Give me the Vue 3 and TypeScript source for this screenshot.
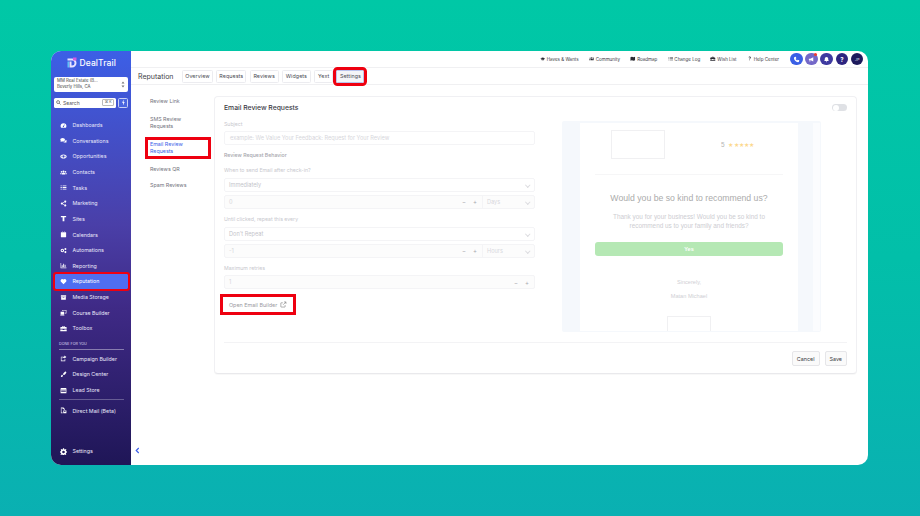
<script setup lang="ts">
interface NavItem {
  label: string
  icon: string
  active?: boolean
}

const icons: Record<string, string> = {
  dash: 'M12 4a10 10 0 0 0-10 10c0 2.2.7 4.2 1.9 5.8h16.2A10 10 0 0 0 22 14 10 10 0 0 0 12 4zm1.6 11.2a2 2 0 1 1-2.4-1.6L15 8l1 .6-2.4 6.6z',
  chat: 'M9 3C4.6 3 1 5.8 1 9.2c0 1.5.7 2.9 1.8 3.9L2 17l4.2-1.8c.9.3 1.8.4 2.8.4 4.4 0 8-2.8 8-6.4S13.4 3 9 3zm10.5 6.4c0 4-3.5 7.2-8 7.7 1.200 1.200 3 1.900 5 1.900.7 0 1.300-.1 2-.3L22 20l-.6-3.300c1-.9 1.600-2.100 1.600-3.400 0-1.600-1.300-3-3.500-3.900z',
  opp: 'M12 5C6 5 1 8 1 12s5 7 11 7 11-3 11-7-5-7-11-7zm0 11a4 4 0 1 1 0-8 4 4 0 0 1 0 8zm-9-4c0-1.500 1.200-2.800 3-3.800a6 6 0 0 0 0 7.600C4.200 14.800 3 13.500 3 12zm15 3.800a6 6 0 0 0 0-7.600c1.800 1 3 2.300 3 3.800s-1.200 2.800-3 3.800z',
  users: 'M12 5a3.500 3.500 0 1 0 0 7 3.500 3.500 0 0 0 0-7zM5 7a2.500 2.500 0 1 0 0 5 2.500 2.500 0 0 0 0-5zm14 0a2.500 2.500 0 1 0 0 5 2.500 2.500 0 0 0 0-5zM12 13c-3.500 0-6 1.800-6 4v2h12v-2c0-2.200-2.500-4-6-4zM5 13c-2.500 0-4 1.300-4 3v2h3.500v-1c0-1.500.6-2.900 1.700-4H5zm14 0h-1.200c1.100 1.100 1.700 2.500 1.700 4v1H23v-2c0-1.700-1.500-3-4-3z',
  tasks: 'M2 5h4v3H2zM9 5h13v3H9zM2 10.500h4v3H2zM9 10.500h13v3H9zM2 16h4v3H2zM9 16h13v3H9z',
  share: 'M18 2a3.500 3.500 0 0 0-3.400 4.300L8.700 9.500a3.500 3.500 0 1 0 0 5l5.900 3.200a3.500 3.500 0 1 0 1-1.800l-5.700-3.100a3.500 3.500 0 0 0 0-1.600l5.700-3.100A3.500 3.500 0 1 0 18 2z',
  sites: 'M3 3h18v5h-6v13H9V8H3z',
  cal: 'M7 2h2v3H7zM15 2h2v3h-2zM4 4h16a1 1 0 0 1 1 1v15a1 1 0 0 1-1 1H4a1 1 0 0 1-1-1V5a1 1 0 0 1 1-1z',
  auto: 'M8 6a6 6 0 1 0 0 12A6 6 0 0 0 8 6zm0 3.500a2.500 2.500 0 1 1 0 5 2.500 2.500 0 0 1 0-5zM18.500 3a3.500 3.500 0 1 0 0 7 3.500 3.500 0 0 0 0-7zm0 11a3.500 3.500 0 1 0 0 7 3.500 3.500 0 0 0 0-7z',
  chart: 'M2 3h2v16h18v2H2zM6 11h3v6H6zM11 6h3v11h-3zM16 9h3v8h-3z',
  heart: 'M12 21.500 2.500 11.800A6 6 0 0 1 12 5a6 6 0 0 1 9.500 6.800z',
  media: 'M3 4h18v5H3zM4 10h16v10H4zm5 2v2h6v-2z',
  course: 'M8 3h14v12h-6v-2h4V5H10v2H8zM2 9h12v10H2zm-1 11h14v2H1z',
  tool: 'M9 3h6a2 2 0 0 1 2 2v2h4a2 2 0 0 1 2 2v4H1V9a2 2 0 0 1 2-2h4V5a2 2 0 0 1 2-2zm0 2v2h6V5zM1 15h8v2h6v-2h8v6H1z',
  campaign: 'M3 6h8v2H5v11h11v-5h2v7H3zM15 2l7 5-7 5V9c-3 0-5 1-6 4 0-5 2-7 6-7.500z',
  design: 'M20 2c-4 1-8 5-10 9l3 3c4-2 8-6 9-10zM8 13c-2 0-4 2-4 4 0 1-.5 2-2 3 3 1 7 0 8-3 .4-1.500-.5-3.500-2-4z',
  store: 'M3 3h18l2 6H1zM2 10h20v11H2zm2 2v4h16v-4z',
  mail: 'M3 2h9l4 4v4h-3V7H9V4H5v15h4v2H3zM11 12h11v9H11zm1 1.500 4.500 3.500 4.500-3.500z',
  gear: 'M10 1h4l.6 3 2.300 1 2.600-1.700 2.800 2.800L20 8.700l1 2.300 3 .6v4l-3 .6-1 2.300 1.700 2.600-2.800 2.800-2.600-1.700-2.300 1-.6 2.800h-4l-.6-2.800-2.300-1-2.600 1.700-2.800-2.800L4 18.500 3 16.200 0 15.600v-4l3-.6 1-2.300-1.700-2.600 2.800-2.800L7.700 5l2.300-1zM12 9a4.500 4.500 0 1 0 0 9 4.500 4.500 0 0 0 0-9z',
}

const mainNav: NavItem[] = [
  { label: 'Dashboards', icon: 'dash' },
  { label: 'Conversations', icon: 'chat' },
  { label: 'Opportunities', icon: 'opp' },
  { label: 'Contacts', icon: 'users' },
  { label: 'Tasks', icon: 'tasks' },
  { label: 'Marketing', icon: 'share' },
  { label: 'Sites', icon: 'sites' },
  { label: 'Calendars', icon: 'cal' },
  { label: 'Automations', icon: 'auto' },
  { label: 'Reporting', icon: 'chart' },
  { label: 'Reputation', icon: 'heart', active: true },
  { label: 'Media Storage', icon: 'media' },
  { label: 'Course Builder', icon: 'course' },
  { label: 'Toolbox', icon: 'tool' },
]

const doneNav: NavItem[] = [
  { label: 'Campaign Builder', icon: 'campaign' },
  { label: 'Design Center', icon: 'design' },
  { label: 'Lead Store', icon: 'store' },
]

const topLinks = [
  { label: 'Haves & Wants', icon: 'M1 10l11-4 11 4-11 4zM6 13v4c3 2 9 2 12 0v-4l-6 2z' },
  { label: 'Community', icon: 'users' },
  { label: 'Roadmap', icon: 'M2 5l6-2 8 2 6-2v16l-6 2-8-2-6 2z' },
  { label: 'Change Log', icon: 'tasks' },
  { label: 'Wish List', icon: 'tool' },
  { label: 'Help Center', icon: 'M7 7a5 5 0 1 1 7.500 4.300c-1.200.7-1.500 1.200-1.500 2.700h-3c0-2.500.7-3.500 2.500-4.600A2 2 0 1 0 10 7zM10 16h3v3h-3z' },
]

// tab widths come from the measured design, the text font is narrower than the original
const tabs = [
  { label: 'Overview', width: 31 },
  { label: 'Requests', width: 30 },
  { label: 'Reviews', width: 29 },
  { label: 'Widgets', width: 29 },
  { label: 'Yext', width: 19 },
  { label: 'Settings', width: 28 },
]

const subNav = [
  { label: 'Review Link' },
  { label: 'SMS Review Requests' },
  { label: 'Email Review Requests', active: true },
  { label: 'Reviews QR' },
  { label: 'Spam Reviews' },
]

function iconPath(name: string): string {
  return icons[name] ?? name
}
</script>

<template>
  <div class="stage">
    <div class="window">
      <aside class="sidebar">
        <div class="logo">
          <svg class="logo-mark" viewBox="0 0 24 24">
            <path d="M3 3h9a9 9 0 0 1 0 18H7V9h4v8h1a5 5 0 0 0 0-10H3z" fill="#e6e2ff" />
            <path d="M14 1h7v6h-7z" fill="#d05be0" />
            <path d="M3 9h3v12H3z" fill="#5fc0f5" />
          </svg>
          <span>DealTrail</span>
        </div>

        <div class="location">
          <div class="location-text">
            <div>MM Real Estate (B...</div>
            <div>Beverly Hills, CA</div>
          </div>
          <svg class="updown" viewBox="0 0 8 14">
            <path d="M4 1 7 5H1zM4 13 1 9h6z" fill="#777" />
          </svg>
        </div>

        <div class="search-row">
          <div class="search">
            <svg class="search-icon" viewBox="0 0 24 24">
              <circle cx="10" cy="10" r="7" fill="none" stroke="#444" stroke-width="3" />
              <path d="m15 15 7 7" stroke="#444" stroke-width="3" />
            </svg>
            <span class="search-text">Search</span>
            <span class="kbd">⌘ K</span>
          </div>
          <div class="bolt">
            <svg viewBox="0 0 24 24"><path d="M13 2 7 13h4l-1 9 6-12h-4z" fill="#fff" /></svg>
          </div>
        </div>

        <nav class="nav main-nav">
          <a v-for="item in mainNav" :key="item.label" class="nav-item" :class="{ active: item.active }">
            <svg class="nav-icon" viewBox="0 0 24 24"><path :d="iconPath(item.icon)" fill="#fff" fill-rule="evenodd" /></svg>
            <span>{{ item.label }}</span>
          </a>
        </nav>

        <div class="section-label">DONE FOR YOU</div>
        <nav class="nav done-nav">
          <a v-for="item in doneNav" :key="item.label" class="nav-item">
            <svg class="nav-icon" viewBox="0 0 24 24"><path :d="iconPath(item.icon)" fill="#fff" fill-rule="evenodd" /></svg>
            <span>{{ item.label }}</span>
          </a>
        </nav>
        <nav class="nav beta-nav">
          <a class="nav-item">
            <svg class="nav-icon" viewBox="0 0 24 24"><path :d="iconPath('mail')" fill="#fff" fill-rule="evenodd" /></svg>
            <span>Direct Mail (Beta)</span>
          </a>
        </nav>

        <nav class="nav settings-nav">
          <a class="nav-item">
            <svg class="nav-icon" viewBox="0 0 24 24"><path :d="iconPath('gear')" fill="#fff" fill-rule="evenodd" /></svg>
            <span>Settings</span>
          </a>
        </nav>
      </aside>

      <main class="main">
        <header class="topbar">
          <a v-for="link in topLinks" :key="link.label" class="top-link">
            <svg viewBox="0 0 24 24"><path :d="iconPath(link.icon)" fill="#2b2b33" fill-rule="evenodd" /></svg>
            {{ link.label }}
          </a>
          <div class="circles">
            <span class="circle phone">
              <svg viewBox="0 0 24 24"><path d="M6 3 9.500 2.500 11.500 8 9 10c1 2.200 2.800 4 5 5l2-2.500 5.500 2L21 18c-.3 2-2 3-4 3C9.800 20.500 3.500 14.200 3 7c0-2 1-3.700 3-4z" fill="#fff" /></svg>
            </span>
            <span class="circle promo">
              <svg viewBox="0 0 24 24"><path d="M3 9h5l10-5v15L8 14v5H5v-5H3z" fill="#fff" /></svg>
              <i class="dot"></i>
            </span>
            <span class="circle bell">
              <svg viewBox="0 0 24 24"><path d="M12 3a6 6 0 0 0-6 6v5l-2 3h16l-2-3V9a6 6 0 0 0-6-6zM10 19h4a2 2 0 0 1-4 0z" fill="#fff" /></svg>
            </span>
            <span class="circle help">?</span>
            <span class="circle avatar">JP</span>
          </div>
        </header>

        <div class="tabbar">
          <h1>Reputation</h1>
          <div class="tabs">
            <button
              v-for="tab in tabs"
              :key="tab.label"
              class="tab"
              :class="{ current: tab.label === 'Settings' }"
              :style="{ width: tab.width + 'px' }"
            >{{ tab.label }}</button>
          </div>
        </div>

        <div class="content">
          <ul class="subnav">
            <li v-for="item in subNav" :key="item.label" :class="{ active: item.active }">{{ item.label }}</li>
          </ul>

          <section class="card">
            <div class="card-body">
              <div class="form">
                <h2>Email Review Requests</h2>
                <label class="label first">Subject</label>
                <div class="field placeholder-field">example: We Value Your Feedback: Request for Your Review</div>
                <div class="group-title">Review Request Behavior</div>

                <label class="label">When to send Email after check-in?</label>
                <div class="field select">Immediately<span class="caret"></span></div>
                <div class="field number-row">
                  <span class="num">0</span>
                  <span class="stepper"><b>−</b><b>+</b></span>
                  <span class="unit">Days<span class="caret"></span></span>
                </div>

                <label class="label">Until clicked, repeat this every</label>
                <div class="field select">Don't Repeat<span class="caret"></span></div>
                <div class="field number-row">
                  <span class="num">-1</span>
                  <span class="stepper"><b>−</b><b>+</b></span>
                  <span class="unit">Hours<span class="caret"></span></span>
                </div>

                <label class="label">Maximum retries</label>
                <div class="field number-row">
                  <span class="num">1</span>
                  <span class="stepper"><b>−</b><b>+</b></span>
                </div>

                <button class="builder">
                  Open Email Builder
                  <svg viewBox="0 0 24 24">
                    <path d="M18 14v6a1 1 0 0 1-1 1H4a1 1 0 0 1-1-1V7a1 1 0 0 1 1-1h6M14 3h7v7M21 3 11 13" fill="none" stroke="#777" stroke-width="2" />
                  </svg>
                </button>
              </div>

              <div class="side">
                <div class="toggle"><span></span></div>
                <div class="preview">
                  <div class="sheet">
                    <div class="sheet-head">
                      <div class="logo-box"></div>
                      <div class="rating">5 <span>★★★★★</span></div>
                    </div>
                    <div class="rule"></div>
                    <h3>Would you be so kind to recommend us?</h3>
                    <p class="thanks">Thank you for your business! Would you be so kind to<br />recommend us to your family and friends?</p>
                    <div class="yes">Yes</div>
                    <p class="sign">Sincerely,</p>
                    <p class="sign name">Matan Michael</p>
                    <div class="foot-box"></div>
                  </div>
                  <div class="scroll-strip"></div>
                </div>
              </div>
            </div>

            <div class="actions">
              <button class="action">Cancel</button>
              <button class="action">Save</button>
            </div>
          </section>
        </div>

        <div class="collapse">
          <svg viewBox="0 0 10 14"><path d="M7.500 2 2.500 7l5 5" fill="none" stroke="#3d5fe8" stroke-width="2.400" /></svg>
        </div>
      </main>
    </div>
  </div>
</template>

<style scoped>
.stage {
  box-sizing: border-box;
  width: 920px;
  height: 516px;
  padding: 51px 52px 51px 51px;
  background: linear-gradient(180deg, #00c8a6 0%, #02bfa9 50%, #0ab0b2 100%);
  font-family: "Inter", "Liberation Sans", sans-serif;
  overflow: hidden;
}

.window {
  display: flex;
  height: 414px;
  background: #fff;
  border-radius: 10px;
  overflow: hidden;
}

.sidebar {
  display: flex;
  flex-direction: column;
  flex: 0 0 80px;
  box-sizing: border-box;
  padding-top: 6px;
  background: linear-gradient(180deg, #3c5fe6 0%, #4a3fa8 42%, #3f2a86 62%, #1f1657 100%);
}

.logo {
  display: flex;
  align-items: center;
  justify-content: center;
  gap: 1.500px;
  height: 12px;
  color: #fff;
  font-size: 8.500px;
  font-weight: 500;
  letter-spacing: 0.1px;
}

.logo-mark {
  width: 12px;
  height: 12px;
}

.location {
  display: flex;
  align-items: center;
  justify-content: space-between;
  box-sizing: border-box;
  height: 15px;
  margin: 7.500px 3px 0;
  padding: 0 3px 0 3px;
  background: #fff;
  border-radius: 2px;
  color: #444;
  font-size: 4.300px;
  line-height: 6.500px;
}

.updown {
  width: 4px;
  height: 7px;
}

.search-row {
  display: flex;
  gap: 2px;
  height: 9.500px;
  margin: 6.500px 3px 0;
}

.search {
  display: flex;
  align-items: center;
  flex: 1;
  padding: 0 2px;
  background: #fff;
  border-radius: 1.500px;
  color: #555;
  font-size: 5px;
}

.search-icon {
  width: 5px;
  height: 5px;
  margin-right: 2px;
}

.search-text {
  flex: 1;
}

.kbd {
  padding: 0 1.500px;
  border: 0.5px solid #bbb;
  border-radius: 1px;
  font-size: 3.500px;
  line-height: 5px;
}

.bolt {
  display: flex;
  align-items: center;
  justify-content: center;
  width: 10px;
  background: #4a66e0;
  border: 0.5px solid #c8d0f5;
  border-radius: 1.500px;
  box-sizing: border-box;
}

.bolt svg {
  width: 7px;
  height: 7px;
}

.nav {
  display: flex;
  flex-direction: column;
}

.main-nav {
  margin-top: 9.900px;
}

.nav-item {
  display: flex;
  align-items: center;
  gap: 6px;
  box-sizing: border-box;
  height: 15.640px;
  margin: 0 3px 0 4px;
  padding-left: 4.500px;
  color: #e9e8fa;
  font-size: 5.300px;
  font-weight: 400;
  white-space: nowrap;
}

.nav-item.active {
  background: #4f6ef0;
  border-radius: 1px;
  color: #fff;
  outline: 2.500px solid #ee0010;
  outline-offset: 0;
}

.nav-icon {
  flex: none;
  width: 7px;
  height: 7px;
}

.section-label {
  margin: 4.600px 7px 0 8px;
  padding-bottom: 3px;
  border-bottom: 1px solid rgba(255, 255, 255, 0.4);
  color: #d8d6ef;
  font-size: 3.700px;
  line-height: 5px;
}

.done-nav {
  margin-top: 1.300px;
}

.beta-nav {
  margin: 1.500px 7px 0 8px;
  padding-top: 2.500px;
  border-top: 1.500px solid rgba(255, 255, 255, 0.28);
}

.beta-nav .nav-item {
  margin: 0;
  padding-left: 0.500px;
}

.settings-nav {
  margin-top: auto;
  padding-bottom: 6px;
}

.main {
  display: flex;
  flex-direction: column;
  flex: 1;
  min-width: 0;
  position: relative;
}

.topbar {
  display: flex;
  align-items: center;
  justify-content: flex-end;
  flex: 0 0 17px;
  box-sizing: border-box;
  padding-right: 4.700px;
  border-bottom: 1px solid #f0f0f2;
}

.top-link {
  display: flex;
  align-items: center;
  gap: 1.300px;
  margin-left: 10.300px;
  color: #3a3a44;
  font-size: 4.500px;
  white-space: nowrap;
}

.top-link svg {
  width: 5.500px;
  height: 5.500px;
}

.circles {
  display: flex;
  gap: 2.700px;
  margin-left: 11px;
}

.circle {
  position: relative;
  display: flex;
  align-items: center;
  justify-content: center;
  width: 12.500px;
  height: 12.500px;
  border-radius: 50%;
  color: #fff;
  font-size: 6px;
  font-weight: 700;
}

.circle svg {
  width: 7px;
  height: 7px;
}

.phone { background: #3a5fe5; }
.promo { background: #7468c8; }
.bell { background: #3e3aa0; }
.help { background: #2d2480; }
.avatar { background: #1d1a5c; color: #b9b8d6; font-size: 4px; font-weight: 500; }

.dot {
  position: absolute;
  top: 0;
  right: 1px;
  width: 3px;
  height: 3px;
  background: #f03a2e;
  border-radius: 50%;
}

.tabbar {
  display: flex;
  align-items: center;
  flex: 0 0 17px;
  box-sizing: border-box;
  padding-left: 7px;
  border-bottom: 1px solid #f0f0f2;
}

.tabbar h1 {
  flex: 0 0 44px;
  margin: 0;
  color: #3f3f48;
  font-size: 7px;
  font-weight: 400;
  white-space: nowrap;
}

.tabs {
  display: flex;
  gap: 3.300px;
}

.tab {
  box-sizing: border-box;
  height: 13px;
  padding: 0;
  background: #fff;
  border: 1px solid #ececf0;
  border-radius: 1.500px;
  color: #4a4a52;
  font-family: inherit;
  font-size: 5.300px;
  letter-spacing: 0.1px;
  white-space: nowrap;
}

.tab.current {
  background: #f4f5f8;
  border-color: #b9c4ee;
  outline: 3px solid #ee0010;
  outline-offset: 0.500px;
}

.content {
  display: flex;
  flex: 1;
  min-height: 0;
  padding: 11px 11px 0 0;
  align-items: flex-start;
}

.subnav {
  flex: 0 0 83px;
  box-sizing: border-box;
  margin: 0;
  padding: 0 6.500px 0 15px;
  list-style: none;
  color: #74747e;
  font-size: 5.300px;
  line-height: 7.300px;
}

.subnav li {
  margin: 0 0 9.400px 4px;
  width: 42px;
}

.subnav li:first-child {
  margin-top: 2px;
  margin-bottom: 10.500px;
  width: auto;
}

.subnav li.active {
  width: auto;
  margin: 0 0 9.200px 1.500px;
  padding: 1px 2.500px;
  color: #3d63e8;
  outline: 3px solid #ee0010;
  outline-offset: 0;
  font-weight: 400;
}

.card {
  flex: 1;
  box-sizing: border-box;
  height: 278px;
  padding: 0 9px;
  background: #fff;
  border: 1px solid #f0f0f3;
  border-bottom-color: #e9e9ec;
  border-radius: 4px;
  box-shadow: 0 1px 1px rgba(0, 0, 0, 0.03);
}

.card-body {
  display: flex;
  justify-content: space-between;
  height: 245px;
  border-bottom: 1px solid #f3f3f5;
}

.form {
  flex: 0 0 311px;
  padding-top: 6px;
}

.form h2 {
  margin: 0;
  color: #3b3b46;
  font-size: 6.800px;
  font-weight: 500;
  line-height: 10px;
}

.label {
  display: block;
  margin-top: 7.500px;
  color: #c8c8ce;
  font-size: 5.200px;
  line-height: 7px;
}

.label.first {
  margin-top: 7.500px;
}

.field {
  box-sizing: border-box;
  display: flex;
  align-items: center;
  height: 14px;
  margin-top: 3.900px;
  padding: 0 5px;
  border: 1px solid #f4f4f6;
  border-radius: 2px;
  color: #c8c8ce;
  font-size: 5.600px;
}

.placeholder-field {
  color: #d6d6db;
}

.group-title {
  margin-top: 6.800px;
  color: #a5a5ac;
  font-size: 5.200px;
  font-weight: 500;
  line-height: 7px;
}

.select {
  justify-content: space-between;
  padding-left: 4px;
  color: #c4c4ca;
}

.caret {
  width: 2.500px;
  height: 2.500px;
  border-right: 0.7px solid #dcdce0;
  border-bottom: 0.7px solid #dcdce0;
  transform: rotate(45deg);
}

.number-row {
  margin-top: 3px;
  padding: 0 0 0 4px;
  background: #fcfcfc;
}

.num {
  flex: 1;
  color: #d6d6da;
}

.stepper {
  display: flex;
  gap: 5px;
  padding-right: 4px;
}

.stepper b {
  width: 6px;
  color: #a8a8ae;
  font-size: 6px;
  font-weight: 400;
  text-align: center;
}

.unit {
  display: flex;
  align-items: center;
  justify-content: space-between;
  box-sizing: border-box;
  width: 52px;
  height: 100%;
  padding: 0 5px 0 4px;
  border-left: 1px solid #f4f4f6;
  color: #d8d8dc;
}

.builder {
  display: inline-flex;
  align-items: center;
  gap: 3px;
  box-sizing: border-box;
  width: 68px;
  height: 13px;
  margin-top: 8.600px;
  padding: 0 5px;
  background: #fff;
  border: none;
  color: #9a9aa2;
  font-family: inherit;
  font-size: 5.400px;
  white-space: nowrap;
  outline: 3px solid #ee0010;
  outline-offset: 1px;
}

.builder svg {
  width: 7px;
  height: 7px;
}

.side {
  display: flex;
  flex-direction: column;
  align-items: flex-end;
  width: 285px;
  padding-top: 7px;
}

.toggle {
  display: flex;
  align-items: center;
  box-sizing: border-box;
  width: 15px;
  height: 7px;
  margin-bottom: 10px;
  padding-left: 0.500px;
  background: #dfe1e5;
  border-radius: 4px;
}

.toggle span {
  width: 6px;
  height: 6px;
  background: #fff;
  border-radius: 50%;
}

.preview {
  display: flex;
  align-self: flex-start;
  box-sizing: border-box;
  width: 259px;
  height: 211px;
  padding: 2px 0 1.500px 18px;
  background: #f5f8fc;
  border-radius: 2px;
  overflow: hidden;
  font-family: "Liberation Sans", Arial, sans-serif;
}

.sheet {
  flex: 0 0 218px;
  box-sizing: border-box;
  padding: 7px 15px 0;
  background: #fff;
  text-align: center;
  overflow: hidden;
}

.sheet-head {
  display: flex;
  align-items: center;
  height: 28.500px;
}

.logo-box {
  box-sizing: border-box;
  width: 53.500px;
  height: 28.500px;
  margin-left: 16px;
  border: 1px solid #f0f0f2;
}

.rating {
  margin-left: 56.500px;
  color: #b5b5b5;
  font-size: 6.500px;
  white-space: nowrap;
}

.rating span {
  margin-left: 2px;
  color: #fcd98f;
  font-size: 6px;
  letter-spacing: 0.200px;
}

.rule {
  height: 1px;
  margin-top: 15px;
  background: #f6f6f7;
}

.sheet h3 {
  margin: 16.300px -10px 0;
  color: #ababab;
  font-size: 8.700px;
  font-weight: 400;
  line-height: 14px;
  white-space: nowrap;
}

.thanks {
  margin: 7.500px 0 0;
  color: #cdcdd2;
  font-size: 6.400px;
  line-height: 9px;
}

.yes {
  height: 14px;
  margin-top: 11.500px;
  background: #b5e8b4;
  border-radius: 3px;
  color: #fff;
  font-size: 5.500px;
  font-weight: 700;
  line-height: 14px;
}

.sign {
  margin: 22px 0 0;
  color: #cfcfd4;
  font-size: 5.600px;
  line-height: 8px;
}

.sign.name {
  margin-top: 6.700px;
}

.foot-box {
  box-sizing: border-box;
  width: 43.500px;
  height: 30px;
  margin: 15.700px auto 0;
  border: 1px solid #f0f0f2;
}

.scroll-strip {
  flex: 0 0 7px;
  margin-left: 14.500px;
  background: #fbfcfe;
}

.actions {
  display: flex;
  justify-content: flex-end;
  gap: 5px;
  padding-top: 8px;
}

.action {
  box-sizing: border-box;
  height: 15px;
  padding: 0 4px;
  background: #fafafa;
  border: 1px solid #e6e6e9;
  border-radius: 2px;
  color: #3a3a42;
  font-family: inherit;
  font-size: 5.400px;
}

.collapse {
  position: absolute;
  left: 4px;
  bottom: 11px;
  width: 5px;
  height: 7px;
}

.collapse svg {
  display: block;
  width: 5px;
  height: 7px;
}
</style>

<style>
html, body {
  margin: 0;
  background: #02bfa9;
}
</style>
